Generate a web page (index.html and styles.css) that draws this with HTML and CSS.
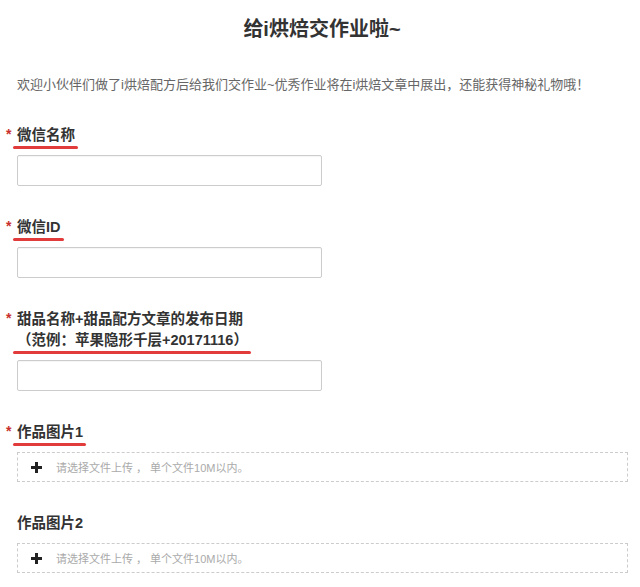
FILE: index.html
```html
<!DOCTYPE html>
<html lang="zh-CN">
<head>
    <meta charset="utf-8">
    <title>给i烘焙交作业啦~</title>
    <link rel="stylesheet" href="styles.css">
</head>
<body>
<div class="page">
    <h2 class="title">给i烘焙交作业啦~</h2>
    <p class="intro">欢迎小伙伴们做了i烘焙配方后给我们交作业~优秀作业将在i烘焙文章中展出，还能获得神秘礼物哦！</p>

    <form class="homework">
        <div class="field">
            <label class="label required"><span class="mark">微信名称</span></label>
            <input type="text" class="text-input" name="wechatName">
        </div>

        <div class="field">
            <label class="label required"><span class="mark">微信ID</span></label>
            <input type="text" class="text-input" name="wechatId">
        </div>

        <div class="field">
            <label class="label required">甜品名称+甜品配方文章的发布日期<br><span class="mark">（范例：苹果隐形千层+20171116）</span></label>
            <input type="text" class="text-input" name="dessert">
        </div>

        <div class="field">
            <label class="label required"><span class="mark">作品图片1</span></label>
            <div class="upload">
                <span class="plus"></span>
                <span class="hint">请选择文件上传 ， 单个文件10M以内。</span>
            </div>
        </div>

        <div class="field">
            <label class="label">作品图片2</label>
            <div class="upload">
                <span class="plus"></span>
                <span class="hint">请选择文件上传 ， 单个文件10M以内。</span>
            </div>
        </div>
    </form>
</div>
</body>
</html>
```

FILE: styles.css
```css
body { margin: 0; background: #fff; color: #333; font-family: "Liberation Sans", "Noto Sans CJK SC", sans-serif; }
.page { padding: 0 13px 0 17px; }
.title { margin: 15px 0 0; font-size: 20px; line-height: 28px; text-align: center; font-weight: bold; color: #333; }
.intro { margin: 32px 0 30px; font-size: 13px; line-height: 20px; color: #666; }

.field { margin-bottom: 31px; }
.label { position: relative; display: block; margin-bottom: 9px; font-size: 14.5px; line-height: 21px; font-weight: bold; color: #333; }
.required::before { content: "*"; position: absolute; left: -11px; top: -1px; color: #c9302c; font-size: 14px; }
.mark { position: relative; display: inline-block; }
.mark::after { content: ""; position: absolute; left: -4px; right: -3px; bottom: -3px; height: 3px; border-radius: 2px; background: #e23b3b; }

.text-input { display: block; box-sizing: border-box; width: 305px; height: 31px; margin: 0; padding: 0 8px; border: 1px solid #ccc; border-radius: 2px; background: #fff; box-shadow: inset 0 1px 1px rgba(0,0,0,0.04); }

.upload { display: flex; align-items: center; box-sizing: border-box; width: 611px; height: 30px; padding-left: 13px; border: 1px dashed #ccc; }
.plus { position: relative; width: 11px; height: 11px; margin-right: 14px; }
.plus::before, .plus::after { content: ""; position: absolute; background: #222; }
.plus::before { left: 0; right: 0; top: 4px; height: 3px; }
.plus::after { top: 0; bottom: 0; left: 4px; width: 3px; }
.hint { font-size: 11px; color: #aaa; }
```
